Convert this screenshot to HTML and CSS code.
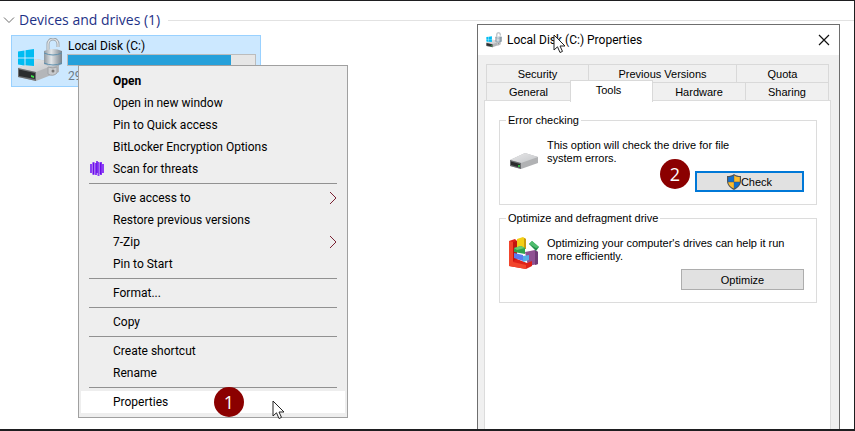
FILE: index.html
```html
<!DOCTYPE html>
<html lang="en">
<head>
  <meta charset="UTF-8" />
  <meta name="viewport" content="width=device-width, initial-scale=1.0" />
  <title>This PC</title>
  <link rel="stylesheet" href="styles.css">
</head>
<body>
  <!-- shared drive icons -->
  <svg class="defs" width="0" height="0" aria-hidden="true">
    <defs>
      <linearGradient id="top" x1="0" y1="0" x2="1" y2="1">
        <stop offset="0" stop-color="#e9e9ea" /><stop offset="1" stop-color="#c3c5c8" />
      </linearGradient>
      <linearGradient id="lock" x1="0" y1="0" x2="1" y2="0">
        <stop offset="0" stop-color="#8d979f" /><stop offset="0.4" stop-color="#e2e6e9" /><stop offset="1" stop-color="#77828b" />
      </linearGradient>
    </defs>
    <symbol id="windowsDrive" viewBox="0 0 46 44">
      <path d="M1 30 19 21 42 25 42 34 19 43 1 39z" fill="#b4b6b9" />
      <path d="M1 30 19 21 42 25 19 34z" fill="url(#top)" />
      <path d="M1 30 19 34 19 43 1 39z" fill="#6a6d70" />
      <path d="M2 31.500 18 35 18 41 2 38z" fill="#2b2d2f" />
      <path d="M14 37l3 1v2l-3-1z" fill="#3be04a" />
      <path d="M1 13.500 7.500 12.500V19.500H1zM8.500 12.300 17 11V19.500H8.500zM1 20.500H7.500V27.500L1 26.500zM8.500 20.500H17V28L8.500 27.300z" fill="#00bcf2" />
      <path d="M31 13V6a5 5 0 0 1 10 0v3" fill="none" stroke="#9aa2a9" stroke-width="3" />
      <path d="M31 13V6a5 5 0 0 1 10 0v3" fill="none" stroke="#e6e9eb" stroke-width="1.200" />
      <path d="M27 13q9-4 18 0v13q-9 5-18 0z" fill="url(#lock)" />
      <path d="M27 15q9 4 18 0M27 25q9 4 18 0" fill="none" stroke="#5d8fae" stroke-width="1" />
      <path d="M31 29q5 2 9 0v6q-4 4-9 1z" fill="#c8cacd" stroke="#a0a3a6" stroke-width="1" />
      <circle cx="36" cy="33" r="1.500" fill="#777" />
    </symbol>
  </svg>

  <main class="screen">
    <h1 class="group-title">
      <svg class="chevron" width="12" height="8" viewBox="0 0 12 8"><path d="M1 1.500 6 6.500 11 1.500" fill="none" stroke="#6d6d6d" /></svg>
      <span>Devices and drives (1)</span>
    </h1>

    <section class="drive">
      <svg class="drive-icon" width="46" height="44"><use href="#windowsDrive" /></svg>
      <div class="drive-info">
        <div class="drive-name">Local Disk (C:)</div>
        <div class="usage"><div class="usage-fill" style="width: 87%"></div></div>
        <div class="drive-free">29</div>
      </div>

      <nav class="menu">
        <button class="item default">Open</button>
        <button class="item">Open in new window</button>
        <button class="item">Pin to Quick access</button>
        <button class="item">BitLocker Encryption Options</button>
        <button class="item">
          <svg class="item-icon" width="14" height="16" viewBox="0 0 14 16"><path d="M1 3v9M3.500 1v13M6 2v12M8.500 1v14M11 1v13M13 3v9" stroke="#8b3df5" stroke-width="2" /><path d="M3.500 2v11M7 0v12M10.500 2v11" stroke="#6a0be8" stroke-width="1.500" /></svg>
          Scan for threats
        </button>
        <hr>
        <button class="item">Give access to <svg class="arrow" width="8" height="14" viewBox="0 0 8 14"><path d="M1 1 7 7 1 13" /></svg></button>
        <button class="item">Restore previous versions</button>
        <button class="item">7-Zip <svg class="arrow" width="8" height="14" viewBox="0 0 8 14"><path d="M1 1 7 7 1 13" /></svg></button>
        <button class="item">Pin to Start</button>
        <hr>
        <button class="item">Format...</button>
        <hr>
        <button class="item">Copy</button>
        <hr>
        <button class="item">Create shortcut</button>
        <button class="item">Rename</button>
        <hr>
        <button class="item selected">Properties</button>
        <span class="step step-one">1</span>
        <svg class="cursor menu-cursor" width="13" height="20" viewBox="0 0 13 20"><path d="M1 1V16L4.500 12.800 7 18.500 9.500 17.400 7 12H12z" /></svg>
      </nav>
    </section>

    <section class="dialog">
      <header class="title-bar">
        <svg width="16" height="16"><use href="#windowsDrive" /></svg>
        <h2>Local Disk (C:) Properties</h2>
        <button class="close" aria-label="Close"><svg width="12" height="12" viewBox="0 0 12 12"><path d="M1 1 11 11M11 1 1 11" fill="none" stroke="#111" stroke-width="1.200" /></svg></button>
        <svg class="cursor title-cursor" width="13" height="20" viewBox="0 0 13 20"><path d="M1 1V16L4.500 12.800 7 18.500 9.500 17.400 7 12H12z" /></svg>
      </header>

      <div class="tabs">
        <div class="tab-row back">
          <button class="tab">Security</button>
          <button class="tab">Previous Versions</button>
          <button class="tab">Quota</button>
        </div>
        <div class="tab-row front">
          <button class="tab">General</button>
          <button class="tab active">Tools</button>
          <button class="tab">Hardware</button>
          <button class="tab">Sharing</button>
        </div>
      </div>

      <div class="panel">
        <fieldset>
          <legend>Error checking</legend>
          <div class="tool">
            <svg class="tool-icon" width="32" height="32" viewBox="0 0 32 32">
              <path d="M2 21 17 14 30 18 30 24 13 30 2 27z" fill="#b1b2b4" />
              <path d="M2 21 17 14 30 18 13 24z" fill="url(#top)" />
              <path d="M2 21 13 24V30L2 27z" fill="#6a6c6f" />
              <path d="M3 22.500 12 25V28.500L3 26z" fill="#2a2b2c" />
              <path d="M10 26h2v2h-2z" fill="#35b045" />
            </svg>
            <p>This option will check the drive for file<br>system errors.</p>
          </div>
          <div class="actions">
            <span class="step step-two">2</span>
            <button class="btn check">
              <svg width="14" height="16" viewBox="0 0 14 16">
                <path d="M7 0C5 1.500 3 2 0 2V7C0 11 3 14 7 16 11 14 14 11 14 7V2C11 2 9 1.500 7 0z" fill="#4f5357" />
                <path d="M6.800 1.500C5 2.700 3.500 3 1.200 3V7.700H6.800z" fill="#0f6fd0" />
                <path d="M7.200 1.500C9 2.700 10.500 3 12.800 3V7.700H7.200z" fill="#fdbc2c" />
                <path d="M1.200 8.300H6.800V14.600C3.500 13 1.500 11 1.200 8.300z" fill="#fdbc2c" />
                <path d="M12.800 8.300H7.200V14.600C10.500 13 12.500 11 12.800 8.300z" fill="#0f6fd0" />
              </svg>
              Check
            </button>
          </div>
        </fieldset>

        <fieldset>
          <legend>Optimize and defragment drive</legend>
          <div class="tool">
            <svg class="tool-icon" width="32" height="32" viewBox="0 0 32 32">
              <path d="M9 2 15 0 18 2V12H9z" fill="#f4cf18" />
              <path d="M16 1 18 2V12H16z" fill="#c99a10" />
              <path d="M17 15 27 13 30 15V27L20 29z" fill="#8f5192" />
              <path d="M27 13 30 15V27L27 28z" fill="#6f3b76" />
              <path d="M1 4 7 2 9 4V22L19 26 24 24V29L18 32 1 29z" fill="#df2118" />
              <path d="M1 4 5 5V25L18 28V32L1 29z" fill="#f2452c" />
              <path d="M5 5 9 4V22L5 24z" fill="#c2140f" />
              <path d="M6 16 15 18 15 24 6 21z" fill="#5a7cf0" />
              <path d="M15 19 21 18V23L15 25z" fill="#55aee8" />
              <path d="M6 11 13 9 17 11V17L6 15z" fill="#2fa34c" />
              <path d="M6 11 13 9 17 11 9 13z" fill="#65cb74" />
              <path d="M21 7 24 4 31 10 28 14z" fill="#23914a" />
              <path d="M21 7 24 4 31 10 28 11z" fill="#50bd6e" />
            </svg>
            <p>Optimizing your computer's drives can help it run<br>more efficiently.</p>
          </div>
          <div class="actions">
            <button class="btn">Optimize</button>
          </div>
        </fieldset>
      </div>
    </section>
  </main>
</body>
</html>
```
FILE: styles.css
```css
* {
  box-sizing: border-box;
}
body {
  margin: 0;
  font-family: Roboto, 'Open Sans', sans-serif;
  font-size: 12px;
  color: #000;
  background-color: #fff;
}
h1, h2, p {
  margin: 0;
  font-weight: normal;
}
button {
  font: inherit;
  color: inherit;
  border: none;
  padding: 0;
}
svg {
  display: block;
  flex: none;
}
.defs {
  position: absolute;
}
.screen {
  position: relative;
  min-height: 100vh;
  overflow: hidden;
  border: solid #1e1e20;
  border-width: 1px 1px 2px 0;
}

/* explorer */
.group-title {
  display: flex;
  align-items: center;
  gap: 4px;
  padding: 8px 0 0 3px;
  font-family: 'Open Sans', sans-serif;
  font-size: 14px;
  line-height: 22px;
  color: #1e3287;
}
.group-title::after {
  content: "";
  flex: 1;
  height: 1px;
  margin-left: 4px;
  background-color: #e2e2e2;
}
.drive {
  position: relative;
  display: flex;
  gap: 4px;
  width: 250px;
  height: 52px;
  margin: 4px 0 0 11px;
  padding: 2px 4px 2px 5px;
  border: 1px solid #99d1ff;
  background-color: #cce8ff;
}
.drive-info {
  flex: 1;
}
.drive-name, .drive-free {
  line-height: 16px;
  padding-left: 1px;
}
.drive-free {
  padding-top: 2px;
  color: #6d7b87;
}
.usage {
  height: 12px;
  border: 1px solid #bcbcbc;
  background-color: #e6e6e6;
}
.usage-fill {
  height: 100%;
  background-color: #26a0da;
}

/* context menu */
.menu {
  position: absolute;
  top: 29px;
  left: 66px;
  width: 270px;
  padding: 4px 2px;
  border: 1px solid #a0a0a0;
  background-color: #eee;
}
.item {
  position: relative;
  display: flex;
  align-items: center;
  justify-content: space-between;
  width: 100%;
  height: 22px;
  padding: 0 8px 0 32px;
  background: none;
}
.item.default {
  font-weight: bold;
}
.item.selected {
  background-color: #fff;
}
.item-icon {
  position: absolute;
  left: 9px;
}
.arrow path {
  fill: none;
  stroke: #7a2233;
}
.menu hr {
  height: 1px;
  margin: 3px 8px;
  border: none;
  background-color: #919191;
}
.step {
  position: absolute;
  display: flex;
  align-items: center;
  justify-content: center;
  width: 30px;
  height: 30px;
  border-radius: 50%;
  font-family: 'Open Sans', sans-serif;
  font-size: 18px;
  color: #fff;
  background-color: #8b0000;
}
.step-one {
  left: 135px;
  bottom: 0;
}
.step-two {
  right: 114px;
  bottom: 3px;
}
.cursor {
  position: absolute;
  fill: #fff;
  stroke: #222;
}
.menu-cursor {
  left: 193px;
  bottom: -3px;
}

/* properties dialog */
.dialog {
  position: absolute;
  top: 23px;
  right: 14px;
  bottom: 0;
  display: flex;
  flex-direction: column;
  width: 363px;
  border: 1px solid #6e6e6e;
  border-bottom: none;
  font-family: 'Liberation Sans', Arial, sans-serif;
  font-size: 11px;
  background-color: #f0f0f0;
}
.title-bar {
  position: relative;
  display: flex;
  align-items: center;
  gap: 5px;
  height: 30px;
  padding: 0 9px 0 8px;
  background-color: #fff;
}
.title-bar h2 {
  flex: 1;
  font-family: Roboto, 'Open Sans', sans-serif;
  font-size: 12px;
}
.close {
  background: none;
}
.title-cursor {
  left: 75px;
  top: 9px;
}
.tabs {
  padding: 9px 10px 0 8px;
}
.tab-row {
  display: grid;
  border-left: 1px solid #d9d9d9;
}
.tab-row.back {
  grid-template-columns: 102fr 148fr 92fr;
}
.tab-row.front {
  grid-template-columns: 84fr 82fr 93fr 83fr;
}
.tab {
  height: 18px;
  border: solid #d9d9d9;
  border-width: 1px 1px 0 0;
  background-color: #f0f0f0;
}
.tab.active {
  position: relative;
  height: 22px;
  margin: -2px 0 -2px -1px;
  padding: 0 6px 3px 0;
  border-left-width: 1px;
  background-color: #fff;
}
.panel {
  flex: 1;
  margin: 0 8px 0 6px;
  padding: 12px 13px 0 14px;
  border: solid #dcdcdc;
  border-width: 1px 1px 0;
  background-color: #fff;
}
fieldset {
  min-height: 92px;
  margin: 0 0 6px;
  padding: 12px 12px 0 8px;
  border: 1px solid #dcdcdc;
}
legend {
  margin-left: -2px;
  padding: 0 2px;
  line-height: 14px;
}
.tool {
  display: flex;
  gap: 7px;
}
.tool p {
  line-height: 13px;
}
.actions {
  position: relative;
  display: flex;
  justify-content: flex-end;
}
.btn {
  display: flex;
  align-items: center;
  justify-content: center;
  width: 123px;
  height: 21px;
  border: 1px solid #adadad;
  background-color: #e1e1e1;
}
.btn.check {
  width: 109px;
  border: 2px solid #0078d7;
}
```
